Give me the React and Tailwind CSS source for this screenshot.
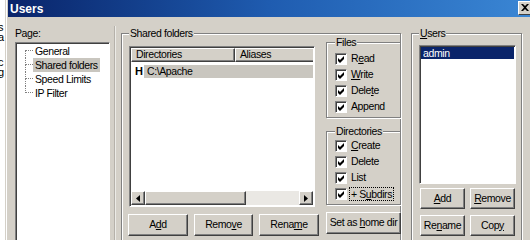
import React from "react";

const Btn = ({ children, className = "" }) => (
  <div
    className={
      "flex items-center justify-center bg-[#d4d0c8] border border-t-white border-l-white border-r-[#404040] border-b-[#404040] shadow-[inset_-1px_-1px_0_#808080] " +
      className
    }
  >
    <span className="whitespace-pre">{children}</span>
  </div>
);

const U = ({ children }) => <span className="underline underline-offset-[1px]">{children}</span>;

const Check = ({ children, focus = false }) => (
  <div className="flex items-center h-[16px]">
    <div className="w-[12px] h-[12px] shrink-0 bg-white border border-t-[#808080] border-l-[#808080] border-b-white border-r-white shadow-[inset_1px_1px_0_#404040] flex items-center justify-center">
      <svg width="7" height="7" viewBox="0 0 7 7" className="ml-[1px] mt-[1px]">
        <path d="M0 2 L2 4 L6 0 L6 3 L2 7 L0 5 Z" fill="#000" />
      </svg>
    </div>
    <span className={focus ? "ml-[2px] px-[1px] whitespace-pre border border-dotted border-black leading-[12px]" : "ml-[4px] whitespace-pre"}>{children}</span>
  </div>
);

const TreeRow = ({ label, first, last, selected }) => (
  <div className="flex h-[14px] items-stretch">
    <div className="w-[8px] flex flex-col">
      <div className={"h-[7px] border-b border-dotted border-b-[#808080] " + (first ? "" : "border-l border-dotted border-l-[#808080]")}></div>
      <div className={"h-[7px] " + (last ? "" : "border-l border-dotted border-l-[#808080]")}></div>
    </div>
    <div className={"px-[2px] leading-[14px] whitespace-pre " + (selected ? "bg-[#c9c6bf]" : "")}>{label}</div>
  </div>
);

export default function App() {
  return (
    <div className="w-[530px] h-[240px] overflow-hidden flex bg-white text-[10.5px] text-black tracking-[-0.4px] font-['Liberation_Sans',Arial,sans-serif]">
      {/* background window fragments */}
      <div className="w-[5px] overflow-hidden flex flex-col text-[11px] leading-[10px] pt-[22px]">
        <span className="-ml-[2px]">s</span>
        <span className="-ml-[2px]">a</span>
        <span className="h-[15px]"></span>
        <span className="-ml-[2px]">c</span>
        <span className="-ml-[2px]">g</span>
      </div>
      {/* window */}
      <div className="flex-1 flex flex-col bg-[#d4d0c8] border-l border-l-[#d4d0c8]">
        <div className="flex-1 flex flex-col border-l border-l-white">
          {/* title bar */}
          <div className="h-[17px] ml-[1px] flex items-center bg-gradient-to-r from-[#0a246a] via-[#1f5cb0] to-[#3a86d4]">
            <span className="ml-[2px] text-white font-bold text-[12px] tracking-[0px]">Users</span>
            <div className="ml-auto -mr-[4px] mt-[-2px] w-[16px] h-[14px] bg-[#d4d0c8] border border-t-white border-l-white border-r-[#404040] border-b-[#404040] flex items-center justify-start pl-[2px]">
              <svg width="8" height="7" viewBox="0 0 8 7">
                <path d="M0 0 L2 0 L4 2 L6 0 L8 0 L5 3.5 L8 7 L6 7 L4 5 L2 7 L0 7 L3 3.5 Z" fill="#000" />
              </svg>
            </div>
          </div>
          {/* body */}
          <div className="flex-1 flex items-start pt-[9px] pl-[8px]">
            {/* page column */}
            <div className="w-[95px] shrink-0 flex flex-col">
              <div className="h-[14px] leading-[14px]">Page:</div>
              <div className="mt-[2px] h-[210px] bg-white border border-t-[#808080] border-l-[#808080] border-b-white border-r-white shadow-[inset_1px_1px_0_#404040] pl-[9px] pt-[1px]">
                <TreeRow label="General" first />
                <TreeRow label="Shared folders" selected />
                <TreeRow label="Speed Limits" />
                <TreeRow label="IP Filter" last />
              </div>
            </div>
            {/* separator */}
            <div className="ml-[4px] shrink-0 w-[2px] h-[220px] border-l border-l-[#b5b1aa] border-r border-r-[#ecebe7]"></div>
            {/* Shared folders group */}
            <fieldset className="ml-[5px] shrink-0 min-w-0 w-[280px] h-[225px] border border-[#808080] shadow-[inset_1px_1px_0_#fff,1px_1px_0_#fff] pl-[7px] pr-[2px]">
              <legend className="ml-[0px] px-[1px] leading-[14px] bg-[#d4d0c8]">Shared folders</legend>
              <div className="flex items-start">
                <div className="flex flex-col">
                  {/* list view */}
                  <div className="mt-[6px] w-[186px] h-[161px] bg-white border border-t-[#808080] border-l-[#808080] border-b-white border-r-white shadow-[inset_1px_1px_0_#404040] p-[1px] flex flex-col">
                    <div className="flex h-[14px] shrink-0">
                      <div className="w-[104px] flex items-center pl-[4px] bg-[#d4d0c8] border-t border-l border-t-white border-l-white border-b border-r border-b-[#404040] border-r-[#404040] shadow-[inset_-1px_-1px_0_#808080]">Directories</div>
                      <div className="flex-1 flex items-center pl-[4px] bg-[#d4d0c8] border-t border-l border-t-white border-l-white border-b border-b-[#404040] shadow-[inset_0_-1px_0_#808080]">Aliases</div>
                    </div>
                    <div className="mt-[2px] flex h-[14px] items-center">
                      <span className="w-[13px] pl-[4px] font-bold text-[11px]">H</span>
                      <span className="flex-1 h-[13px] leading-[13px] pl-[3px] bg-[#c9c6bf]">C:\Apache</span>
                    </div>
                    <div className="flex-1"></div>
                    {/* scrollbar */}
                    <div className="flex h-[14px] shrink-0">
                      <Btn className="w-[14px] h-[14px]">
                        <svg width="4" height="7" viewBox="0 0 4 7" className="block"><path d="M4 0 L0 3.5 L4 7 Z" fill="#000" /></svg>
                      </Btn>
                      <div className="w-[101px] h-[14px] bg-[#d4d0c8] border border-t-white border-l-white border-r-[#404040] border-b-[#404040] shadow-[inset_-1px_-1px_0_#808080]"></div>
                      <div className="flex-1 bg-[#eae8e4]"></div>
                      <Btn className="w-[14px] h-[14px]">
                        <svg width="4" height="7" viewBox="0 0 4 7" className="block"><path d="M0 0 L4 3.5 L0 7 Z" fill="#000" /></svg>
                      </Btn>
                    </div>
                  </div>
                  {/* buttons */}
                  <div className="mt-[7px] -ml-[1px] flex gap-[6px]">
                    <Btn className="w-[60px] h-[22px]">A<U>d</U>d</Btn>
                    <Btn className="w-[59px] h-[22px]">Remo<U>v</U>e</Btn>
                    <Btn className="w-[60px] h-[22px]">Rena<U>m</U>e</Btn>
                  </div>
                </div>
                {/* right column */}
                <div className="ml-[7px] -mt-[5px] flex flex-col">
                  <fieldset className="w-[75px] min-w-0 border border-[#808080] shadow-[inset_1px_1px_0_#fff,1px_1px_0_#fff] pl-[8px] pb-[2px]">
                    <legend className="px-[1px] leading-[14px] bg-[#d4d0c8]">Files</legend>
                    <div className="mt-[2px]">
                      <Check>R<U>e</U>ad</Check>
                      <Check><U>W</U>rite</Check>
                      <Check>Dele<U>t</U>e</Check>
                      <Check>Append</Check>
                    </div>
                  </fieldset>
                  <fieldset className="mt-[6px] w-[75px] min-w-0 border border-[#808080] shadow-[inset_1px_1px_0_#fff,1px_1px_0_#fff] pl-[8px] pb-[2px]">
                    <legend className="px-[1px] leading-[14px] bg-[#d4d0c8]">Directories</legend>
                    <div>
                      <Check><U>C</U>reate</Check>
                      <Check>Delete</Check>
                      <Check>List</Check>
                      <Check focus>+ S<U>u</U>bdirs</Check>
                    </div>
                  </fieldset>
                  <Btn className="mt-[7px] w-[75px] h-[22px]">Set as <U>h</U>ome dir</Btn>
                </div>
              </div>
            </fieldset>
            {/* Users group */}
            <fieldset className="ml-[10px] shrink-0 min-w-0 w-[111px] h-[225px] border border-[#808080] shadow-[inset_1px_1px_0_#fff,1px_1px_0_#fff] pl-[7px]">
              <legend className="px-[1px] leading-[14px] bg-[#d4d0c8]"><U>U</U>sers</legend>
              <div className="mt-[5px] w-[97px] h-[139px] bg-white border border-t-[#808080] border-l-[#808080] border-b-white border-r-white shadow-[inset_1px_1px_0_#404040] p-[1px]">
                <div className="h-[12px] leading-[12px] pl-[2px] bg-[#0a246a] text-white">admin</div>
              </div>
              <div className="mt-[4px] ml-[1px] grid grid-cols-[45px_45px] gap-x-[5px] gap-y-[6px]">
                <Btn className="h-[21px]"><U>A</U>dd</Btn>
                <Btn className="h-[21px]"><U>R</U>emove</Btn>
                <Btn className="h-[21px]">Re<U>n</U>ame</Btn>
                <Btn className="h-[21px]">Cop<U>y</U></Btn>
              </div>
            </fieldset>
          </div>
        </div>
      </div>
    </div>
  );
}
